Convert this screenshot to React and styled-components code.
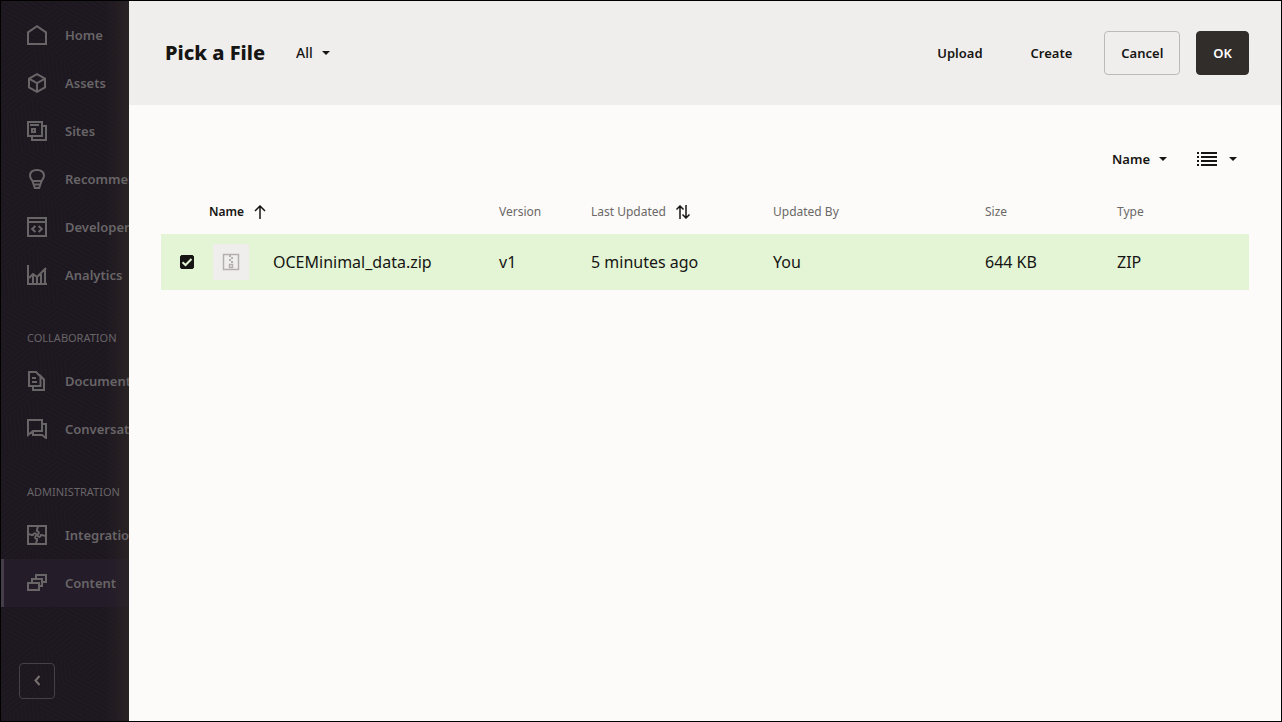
import React, { useState } from 'react'
import styled, { createGlobalStyle } from 'styled-components'

const GlobalStyle = createGlobalStyle`
  * {
    box-sizing: border-box;
  }

  body {
    margin: 0;
    font-family: "Noto Sans", "Open Sans", sans-serif;
    color: #161513;
  }

  button, select, input {
    font-family: inherit;
    color: inherit;
    margin: 0;
  }
`;

const Page = styled.div`
  display: flex;
  min-height: 100vh;
  border: 1px solid #000;
  background-color: #fcfbfa;
`;

const Sidebar = styled.aside`
  position: relative;
  display: flex;
  flex-direction: column;
  flex: 0 0 128px;
  overflow: hidden;
  padding: 10px 0 22px;
  background-color: #1f1922;
  color: #686567;
`;

const Texture = styled.svg`
  position: absolute;
  inset: 0;
  width: 100%;
  height: 100%;
`;

const EdgeShade = styled.div`
  position: absolute;
  inset: 0 0 0 auto;
  width: 24px;
  background: linear-gradient(to right, rgba(41, 35, 37, 0), #292325);
  pointer-events: none;
`;

const Nav = styled.nav`
  position: relative;
  flex: 1;
`;

const NavLink = styled.a`
  display: flex;
  align-items: center;
  gap: 18px;
  height: 48px;
  padding-left: ${(props) => (props.$active ? '23px' : '26px')};
  border-left: ${(props) => (props.$active ? '3px solid #453d49' : 'none')};
  background: ${(props) => (props.$active ? 'linear-gradient(to right, #241c29 104px, #2a2429)' : 'none')};
  color: inherit;
  font-size: 13px;
  font-weight: 600;
  white-space: nowrap;
  text-decoration: none;
`;

const NavHeading = styled.h2`
  margin: 0;
  padding: 31px 0 11px 26px;
  font-size: 11px;
  font-weight: 400;
  line-height: 16px;
  text-transform: uppercase;
`;

const NavIcon = styled.svg`
  flex: none;
  width: 20px;
  height: 20px;
  fill: none;
  stroke: currentColor;
  stroke-width: 2;
`;

const CollapseButton = styled.button`
  position: relative;
  display: flex;
  align-items: center;
  justify-content: center;
  width: 36px;
  height: 36px;
  margin-left: 18px;
  padding: 0;
  border: 1px solid #454046;
  border-radius: 4px;
  background: none;
  color: #77716f;
`;

const Main = styled.main`
  flex: 1;
  min-width: 0;
`;

const Header = styled.header`
  display: flex;
  align-items: center;
  gap: 31px;
  padding: 30px 32px 30px 36px;
  background-color: #f0eeed;
`;

const Title = styled.h1`
  margin: 0;
  font-size: 20px;
  font-weight: 800;
  line-height: 44px;
`;

const Actions = styled.div`
  display: flex;
  gap: 16px;
  margin-left: auto;
`;

const Button = styled.button`
  height: 44px;
  padding: 0 16px;
  border: ${(props) => (props.$outlined ? '1px solid #bcbab8' : 'none')};
  border-radius: 4px;
  background-color: transparent;
  font-size: 13px;
  font-weight: 600;
`;

const PrimaryButton = styled(Button)`
  border: 1px solid #312d2a;
  background-color: #312d2a;
  color: #fff;
`;

const Picker = styled.div`
  display: grid;
  align-items: center;
`;

const Select = styled.select`
  grid-area: 1 / 1;
  appearance: none;
  field-sizing: content;
  padding: 0 17px 0 0;
  border: none;
  background: none;
  font-size: ${(props) => (props.$strong ? '13px' : '14px')};
  font-weight: ${(props) => (props.$strong ? 600 : 500)};
  line-height: 20px;
`;

const CaretSvg = styled.svg`
  grid-area: 1 / 1;
  justify-self: end;
  width: 8px;
  height: 4px;
  fill: #161513;
  pointer-events: none;
`;

const Toolbar = styled.div`
  display: flex;
  align-items: center;
  justify-content: flex-end;
  gap: 30px;
  padding: 44px 44px 20px;
`;

const ViewButton = styled.button`
  display: flex;
  align-items: center;
  gap: 12px;
  height: 20px;
  padding: 0;
  border: none;
  background: none;
`;

const TableWrapper = styled.div`
  padding: 0 32px;
`;

const Table = styled.table`
  width: 100%;
  table-layout: fixed;
  border-collapse: collapse;
  text-align: left;
`;

const Col = styled.col`
  width: ${(props) => props.$width};
`;

const Th = styled.th`
  height: 45px;
  padding: 0;
  color: ${(props) => (props.$sorted ? '#161513' : '#6b6866')};
  font-size: 12px;
  font-weight: ${(props) => (props.$sorted ? 600 : 400)};
`;

const SortButton = styled.button`
  display: flex;
  align-items: center;
  gap: 10px;
  padding: 0;
  border: none;
  background: none;
  font-size: inherit;
  font-weight: inherit;
`;

const Row = styled.tr`
  background-color: ${(props) => (props.$selected ? '#e4f5d5' : 'transparent')};
`;

const Td = styled.td`
  height: 56px;
  padding: 0;
  font-size: 16px;
`;

const CheckLabel = styled.label`
  display: grid;
  width: 14px;
  margin-left: 19px;
`;

const Checkbox = styled.input`
  grid-area: 1 / 1;
  appearance: none;
  width: 14px;
  height: 14px;
  border: 1px solid #161513;
  border-radius: 2px;

  &:checked {
    background-color: #161513;
  }
`;

const CheckMark = styled.svg`
  grid-area: 1 / 1;
  width: 14px;
  height: 14px;
  fill: none;
  stroke: #e4f5d5;
  stroke-width: 2;
  pointer-events: none;
`;

const FileName = styled.div`
  display: flex;
  align-items: center;
  gap: 24px;
  padding-left: 4px;
`;

const Thumb = styled.span`
  display: flex;
  align-items: center;
  justify-content: center;
  width: 36px;
  height: 36px;
  background-color: #f0eeed;
`;

const arm = 'M10 10C12.500 8.500 12.500 6.500 10 6c-.500-2 1-2.500 1-5';

const icons = {
  home: <path d="M1 7.400 10 1.200l9 6.200V19H1z" />,
  assets: <path d="M10 1.200 18 5.600v8.800l-8 4.400-8-4.400V5.600zM2 5.600l8 4.600 8-4.600M10 10.200v8.600" />,
  sites: (
    <>
      <path d="M1 1h14v14H1zM3 4h9M15 5h4v14H5v-4" />
      <path d="M5 8h3v3H5z" />
    </>
  ),
  recommend: <path d="M10 1C5.500 1 3 3.400 3 6.800c0 2.600 2.200 3.800 2.800 6.200L7.800 19h4.400l2-6c.6-2.400 2.800-3.600 2.800-6.200C17 3.400 14.500 1 10 1zM6 12h8M6.600 15.500h6.800" />,
  developer: <path d="M1 1h18v18H1zM1 5h18M8.400 9 5.200 12l3.200 3M11.600 9l3.200 3-3.200 3" />,
  analytics: <path d="M1 0v19h19M2 13l4-4 4 3L19 3M6 10v9M10 12v7M14 9v10M18 4v15" />,
  documents: <path d="M2 1h7l4.500 4.500V15H2zM5 7h4M5 11h5M12 3.500l5 5V19H6v-4" />,
  conversations: <path d="M1 1h14v11H6l-5 4zM15 5h4v14l-4-3H6v-4" />,
  integrations: (
    <>
      <path d="M1 1h18v18H1z" />
      <path d={arm} />
      <path d={arm} transform="rotate(90 10 10)" />
      <path d={arm} transform="rotate(180 10 10)" />
      <path d={arm} transform="rotate(270 10 10)" />
    </>
  ),
  content: <path d="M1 10h11v7H1zM5 10V6h10v7h-3M9 6V2h10v7h-4" />,
};

const sections = [
  {
    links: [
      { icon: 'home', label: 'Home' },
      { icon: 'assets', label: 'Assets' },
      { icon: 'sites', label: 'Sites' },
      { icon: 'recommend', label: 'Recommendations' },
      { icon: 'developer', label: 'Developer' },
      { icon: 'analytics', label: 'Analytics' },
    ],
  },
  {
    heading: 'Collaboration',
    links: [
      { icon: 'documents', label: 'Documents' },
      { icon: 'conversations', label: 'Conversations' },
    ],
  },
  {
    heading: 'Administration',
    links: [
      { icon: 'integrations', label: 'Integrations' },
      { icon: 'content', label: 'Content', active: true },
    ],
  },
];

const files = [
  { id: 1, name: 'OCEMinimal_data.zip', version: 'v1', updated: '5 minutes ago', by: 'You', size: '644 KB', type: 'ZIP' },
];

const Caret = () => (
  <CaretSvg viewBox="0 0 8 4" aria-hidden="true">
    <path d="M0 0h8L4 4z" />
  </CaretSvg>
);

// tile of small hatched facets behind the menu
const SidebarTexture = () => (
  <Texture aria-hidden="true">
    <defs>
      <pattern id="hatchA" width="4" height="4" patternUnits="userSpaceOnUse" patternTransform="rotate(28)">
        <path d="M0 1h4" stroke="#19141c" />
      </pattern>
      <pattern id="hatchB" width="4" height="4" patternUnits="userSpaceOnUse" patternTransform="rotate(-38)">
        <path d="M0 1h4" stroke="#19141c" />
      </pattern>
      <pattern id="hatchC" width="4" height="4" patternUnits="userSpaceOnUse" patternTransform="rotate(84)">
        <path d="M0 1h4" stroke="#19141c" />
      </pattern>
      <pattern id="facets" width="128" height="150" patternUnits="userSpaceOnUse">
        <path d="M0 0h50L34 40 0 56zM50 0h78v34L88 52zM34 96l44-24 50 30v48H62z" fill="url(#hatchA)" />
        <path d="M50 0 88 52 78 72 34 40zM0 56l34-16v56L0 122zM128 34v68L78 72l10-20z" fill="url(#hatchB)" />
        <path d="M34 40 78 72 34 96zM0 122l34-26 28 54H0z" fill="url(#hatchC)" />
      </pattern>
    </defs>
    <rect width="100%" height="100%" fill="url(#facets)" />
  </Texture>
);

const Menu = () => (
  <Sidebar>
    <SidebarTexture />
    <EdgeShade />
    <Nav>
      {sections.map((section, i) => (
        <div key={i}>
          {section.heading && <NavHeading>{section.heading}</NavHeading>}
          {section.links.map((link) => (
            <NavLink key={link.label} href="#" $active={link.active}>
              <NavIcon viewBox="0 0 20 20" aria-hidden="true">{icons[link.icon]}</NavIcon>
              {link.label}
            </NavLink>
          ))}
        </div>
      ))}
    </Nav>
    <CollapseButton aria-label="Collapse menu">
      <svg width="8" height="12" viewBox="0 0 8 12" fill="none" stroke="currentColor" strokeWidth="2">
        <path d="M6.500 1 2.500 5.500l4 4.500" />
      </svg>
    </CollapseButton>
  </Sidebar>
);

const App = () => {
  const [filter, setFilter] = useState('All');
  const [sortBy, setSortBy] = useState('Name');
  const [selected, setSelected] = useState([1]);

  const toggleFile = (id) => {
    setSelected(selected.includes(id) ? selected.filter((s) => s !== id) : [...selected, id]);
  };

  return (
    <Page>
      <GlobalStyle />
      <Menu />
      <Main>
        <Header>
          <Title>Pick a File</Title>
          <Picker>
            <Select aria-label="Show" value={filter} onChange={(e) => setFilter(e.target.value)}>
              <option>All</option>
            </Select>
            <Caret />
          </Picker>
          <Actions>
            <Button>Upload</Button>
            <Button>Create</Button>
            <Button $outlined>Cancel</Button>
            <PrimaryButton>OK</PrimaryButton>
          </Actions>
        </Header>
        <Toolbar>
          <Picker>
            <Select $strong aria-label="Sort by" value={sortBy} onChange={(e) => setSortBy(e.target.value)}>
              <option>Name</option>
            </Select>
            <Caret />
          </Picker>
          <ViewButton aria-label="List view">
            <svg width="20" height="14" viewBox="0 0 20 14" fill="#161513">
              <path d="M0 0h2v2H0zM0 4h2v2H0zM0 8h2v2H0zM0 12h2v2H0zM4 0h16v2H4zM4 4h16v2H4zM4 8h16v2H4zM4 12h16v2H4z" />
            </svg>
            <Caret />
          </ViewButton>
        </Toolbar>
        <TableWrapper>
          <Table>
            <colgroup>
              <Col $width="48px" />
              <Col />
              <Col $width="92px" />
              <Col $width="182px" />
              <Col $width="212px" />
              <Col $width="132px" />
              <Col $width="132px" />
            </colgroup>
            <thead>
              <tr>
                <Th as="td" />
                <Th $sorted aria-sort="ascending">
                  <SortButton>
                    Name
                    <svg width="12" height="14" viewBox="0 0 12 14" fill="none" stroke="#161513" strokeWidth="1.5">
                      <path d="M6 14V1M1 6l5-5 5 5" />
                    </svg>
                  </SortButton>
                </Th>
                <Th>Version</Th>
                <Th>
                  <SortButton>
                    Last Updated
                    <svg width="14" height="14" viewBox="0 0 14 14" fill="none" stroke="#161513" strokeWidth="1.5">
                      <path d="M4 14V1M.5 4.500 4 1l3.500 3.500M10 0v13M6.500 9.500 10 13l3.500-3.500" />
                    </svg>
                  </SortButton>
                </Th>
                <Th>Updated By</Th>
                <Th>Size</Th>
                <Th>Type</Th>
              </tr>
            </thead>
            <tbody>
              {files.map((file) => (
                <Row key={file.id} $selected={selected.includes(file.id)}>
                  <Td>
                    <CheckLabel>
                      <Checkbox
                        type="checkbox"
                        aria-label={file.name}
                        checked={selected.includes(file.id)}
                        onChange={() => toggleFile(file.id)}
                      />
                      <CheckMark viewBox="0 0 14 14"><path d="M2.500 7.200 5.500 10l6-6" /></CheckMark>
                    </CheckLabel>
                  </Td>
                  <Td>
                    <FileName>
                      <Thumb>
                        <svg width="18" height="18" viewBox="0 0 18 18" fill="none" stroke="#b3b0ae">
                          <path d="M1.500 1.500h15v15h-15z" strokeWidth="1.5" />
                          <path d="M7 3h2M9 5h2M7 7h2M9 9h2" strokeWidth="2" />
                          <path d="M7.500 11.500h3v3h-3z" strokeWidth="1.5" />
                        </svg>
                      </Thumb>
                      {file.name}
                    </FileName>
                  </Td>
                  <Td>{file.version}</Td>
                  <Td>{file.updated}</Td>
                  <Td>{file.by}</Td>
                  <Td>{file.size}</Td>
                  <Td>{file.type}</Td>
                </Row>
              ))}
            </tbody>
          </Table>
        </TableWrapper>
      </Main>
    </Page>
  )
}

export default App;
